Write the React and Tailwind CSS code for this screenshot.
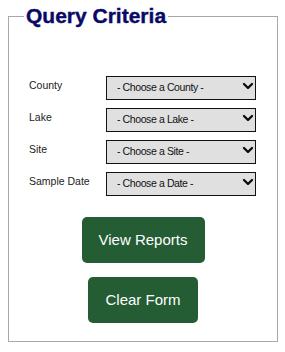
import { ChevronDown } from 'lucide-react'

const fields = [
  { label: 'County', placeholder: '- Choose a County -' },
  { label: 'Lake', placeholder: '- Choose a Lake -' },
  { label: 'Site', placeholder: '- Choose a Site -' },
  { label: 'Sample Date', placeholder: '- Choose a Date -' },
]

function Picker({ placeholder }) {
  return (
    <div className="relative w-[150px] h-[24px]">
      <select className="appearance-none w-full h-full bg-[#e0e0e0] border border-[#111] pl-[10px] text-[10.5px] tracking-[-0.4px] text-[#111] outline-none">
        <option>{placeholder}</option>
      </select>
      <ChevronDown size={16} strokeWidth={3.6} className="absolute right-0 top-[3.5px] text-[#111] pointer-events-none" />
    </div>
  )
}

export default function App() {
  return (
    <div className="w-[285px] h-[352px] bg-white pt-[5px] font-['Liberation_Sans',Arial,sans-serif]">
      <fieldset className="mx-[8px] w-[270px] h-[337px] border border-[#a8a8a8] px-[20px]">
        <legend className="-ml-[5px] px-[2px] text-[21px] leading-[22px] font-bold text-[#0a0a66] [-webkit-text-stroke:0.4px_#0a0a66]">Query Criteria</legend>
        <div className="flex flex-col gap-[8px] mt-[47px]">
          {fields.map(f => (
            <div key={f.label} className="flex items-center">
              <span className="w-[77px] text-[10.5px] text-[#222]">{f.label}</span>
              <Picker placeholder={f.placeholder} />
            </div>
          ))}
        </div>
        <div className="flex flex-col items-center gap-[14px] mt-[23px]">
          <button className="w-[123px] h-[46px] rounded-[5px] bg-[#245c34] text-white text-[15px]">View Reports</button>
          <button className="w-[110px] h-[46px] rounded-[5px] bg-[#245c34] text-white text-[15px]">Clear Form</button>
        </div>
      </fieldset>
    </div>
  )
}
